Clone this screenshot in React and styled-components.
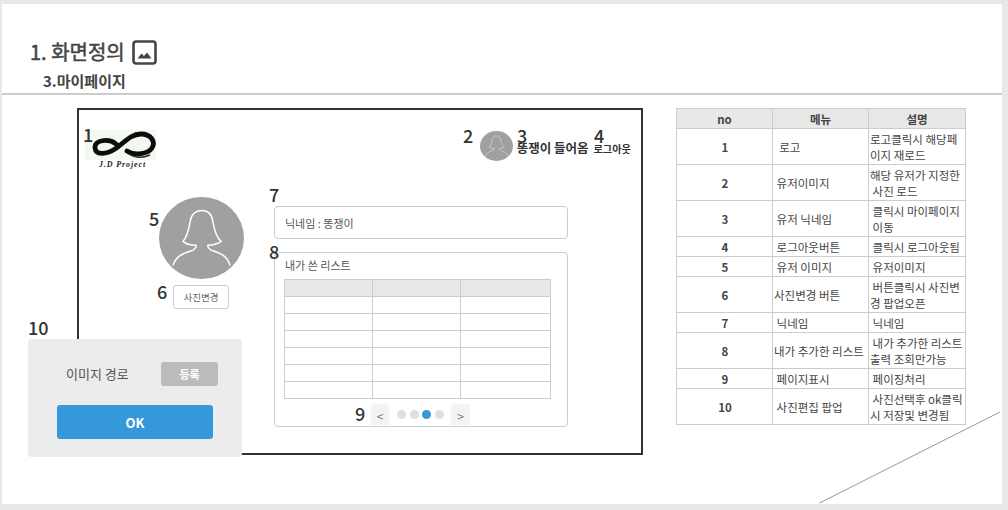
import React from "react";
import styled, { createGlobalStyle } from "styled-components";

const FONT = `"Noto Sans CJK KR", "Noto Sans", sans-serif`;

const specRows = [
  ["1", "  로고", "로고클릭시 해당페\n이지 재로드", true],
  ["2", " 유저이미지", "해당 유저가 지정한\n 사진 로드", true],
  ["3", " 유저 닉네임", " 클릭시 마이페이지\n 이동", true],
  ["4", " 로그아웃버튼", " 클릭시 로그아웃됨"],
  ["5", " 유저 이미지", " 유저이미지"],
  ["6", "사진변경 버튼", " 버튼클릭시 사진변\n경 팝업오픈", true],
  ["7", " 닉네임", " 닉네임"],
  ["8", "내가 추가한 리스트", " 내가 추가한 리스트\n출력 조회만가능", true],
  ["9", " 페이지표시", " 페이징처리"],
  ["10", " 사진편집 팝업", " 사진선택후 ok클릭\n시 저장및 변경됨", true],
];

const Person = ({ color, width }) => (
  <svg viewBox="0 0 85 85" width="100%" height="100%" preserveAspectRatio="none">
    <path
      d="M14 71C17 60 26 58 34 55C37 53 38 52 37 50C33 50 27 49 24 46C29 40 30 32 31 26C32 18 37 14 43 14C49 14 53 18 54 26C55 32 56 40 62 46C58 49 53 50 49 50C48 52 49 53 52 55C60 58 68 60 71 71"
      fill="none"
      stroke={color}
      strokeWidth={width}
    />
  </svg>
);

const App = () => {
  return (
    <Slide>
      <GlobalStyle />
      <Header>
        <Title>
          1. 화면정의
          <svg width="25" height="25" viewBox="0 0 25 25">
            <rect x="1.500" y="1.500" width="22" height="22" rx="2.500" fill="none" stroke="#444" strokeWidth="2.600" />
            <path d="M5.500 18.500L9.500 13.500L12 16L15 12.500L19.500 18.500Z" fill="#444" />
          </svg>
        </Title>
        <SubTitle>3.마이페이지</SubTitle>
      </Header>

      <Main>
        <Frame>
          <Num $left={4} $top={14}>1</Num>
          <Num $left={384} $top={15}>2</Num>
          <Num $left={438} $top={15}>3</Num>
          <Num $left={515} $top={15}>4</Num>
          <Num $left={70} $top={98}>5</Num>
          <Num $left={78} $top={171}>6</Num>
          <Num $left={190} $top={74}>7</Num>
          <Num $left={190} $top={131}>8</Num>
          <Num $left={276} $top={293}>9</Num>

          <TopBar>
            <Logo>
              <LogoMark>
                <svg width="71" height="30" viewBox="0 0 71 30">
                  <path
                    d="M31 14C24 8 9 10 10 18C11 26 22 24 30 19C38 14 45 4 56 4C66 4 71 12 67 18C63 24 50 26 42 21"
                    fill="none"
                    stroke="#0c0c0c"
                    strokeWidth="4.800"
                    strokeLinecap="round"
                  />
                  <path d="M44 24C50 28 58 28 65 25" fill="none" stroke="#222" strokeWidth="1.500" />
                </svg>
              </LogoMark>
              <LogoText>J.D Project</LogoText>
            </Logo>
            <UserArea>
              <SmallAvatar>
                <Person color="#d4d4d4" width="2" />
              </SmallAvatar>
              <UserName>똥쟁이 들어옴</UserName>
              <Logout>로그아웃</Logout>
            </UserArea>
          </TopBar>

          <Body>
            <Profile>
              <BigAvatar>
                <Person color="#fff" width="1.500" />
              </BigAvatar>
              <PhotoButton>사진변경</PhotoButton>
            </Profile>
            <Content>
              <NickBox>닉네임 : 똥쟁이</NickBox>
              <ListBox>
                <ListTitle>내가 쓴 리스트</ListTitle>
                <MiniTable>
                  <colgroup>
                    <col width="88" />
                    <col width="88" />
                    <col width="90" />
                  </colgroup>
                  <tbody>
                    {[0, 1, 2, 3, 4, 5, 6].map((r) => (
                      <tr key={r}>
                        {[0, 1, 2].map((c) => (
                          <MiniCell key={c} $head={r === 0} />
                        ))}
                      </tr>
                    ))}
                  </tbody>
                </MiniTable>
                <Pager>
                  <PageArrow>&lt;</PageArrow>
                  <Dots>
                    <Dot />
                    <Dot />
                    <Dot $active />
                    <Dot />
                  </Dots>
                  <PageArrow>&gt;</PageArrow>
                </Pager>
              </ListBox>
            </Content>
          </Body>
        </Frame>

        <SpecTable>
          <colgroup>
            <col width="96" />
            <col width="96" />
            <col width="97" />
          </colgroup>
          <thead>
            <tr>
              <SpecHead>no</SpecHead>
              <SpecHead>메뉴</SpecHead>
              <SpecHead>설명</SpecHead>
            </tr>
          </thead>
          <tbody>
            {specRows.map(([no, menu, desc, tall]) => (
              <tr key={no}>
                <NoCell $tall={tall}>{no}</NoCell>
                <SpecCell $tall={tall}>{menu}</SpecCell>
                <SpecCell $tall={tall}>{desc}</SpecCell>
              </tr>
            ))}
          </tbody>
        </SpecTable>
      </Main>

      <Popup>
        <PopupNum>10</PopupNum>
        <PopupRow>
          <PopupLabel>이미지 경로</PopupLabel>
          <RegisterButton>등록</RegisterButton>
        </PopupRow>
        <OkButton>OK</OkButton>
      </Popup>

      <Corner viewBox="0 0 182 94" width="182" height="94">
        <line x1="0.500" y1="92" x2="181" y2="1" stroke="#999" strokeWidth="1" />
      </Corner>
    </Slide>
  );
};

const GlobalStyle = createGlobalStyle`
  html, body {
    margin: 0;
    background: #e8e8e8;
  }
  body {
    font-family: ${FONT};
    overflow: hidden;
  }
  * {
    box-sizing: border-box;
  }
`;

const Slide = styled.div`
  position: relative;
  width: 1000px;
  height: 500px;
  margin: 4px 0 0 2px;
  background: #fff;
`;

const Header = styled.header`
  height: 91px;
  padding: 32px 0 0 28px;
  border-bottom: 2px solid #ccc;
`;

const Title = styled.h1`
  display: flex;
  align-items: center;
  gap: 7px;
  margin: 0;
  height: 32px;
  font-size: 20px;
  font-weight: 400;
  line-height: 32px;
  color: #444;
  -webkit-text-stroke: 0.500px #444;
`;

const SubTitle = styled.h2`
  margin: 3px 0 0 13px;
  font-size: 15px;
  font-weight: 700;
  line-height: 20px;
  color: #444;
`;

const Main = styled.main`
  display: flex;
  align-items: flex-start;
  gap: 33px;
  padding: 13px 0 0 75px;
`;

const Frame = styled.section`
  position: relative;
  flex: none;
  width: 566px;
  height: 347px;
  border: 2px solid #333;
`;

const Num = styled.span`
  position: absolute;
  left: ${(p) => p.$left}px;
  top: ${(p) => p.$top}px;
  font-size: 18px;
  font-weight: 500;
  line-height: 20px;
  color: #333;
`;

const TopBar = styled.div`
  display: flex;
  justify-content: space-between;
  height: 87px;
  padding: 20px 10px 0 6px;
`;

const Logo = styled.div`
  display: flex;
  flex-direction: column;
  align-items: center;
  width: 71px;
`;

const LogoMark = styled.div`
  height: 30px;
  background: #f3f8f1;

  svg {
    display: block;
  }
`;

const LogoText = styled.span`
  padding-left: 4px;
  font-family: "Liberation Serif", serif;
  font-size: 8px;
  font-style: italic;
  font-weight: 700;
  line-height: 9px;
  letter-spacing: 0.900px;
  color: #222;
`;

const UserArea = styled.div`
  display: flex;
  align-items: flex-start;
  height: 31px;
`;

const SmallAvatar = styled.div`
  width: 33px;
  height: 30px;
  margin: 1px 4px 0 0;
  border-radius: 50%;
  background: #a0a0a0;
  overflow: hidden;
`;

const UserName = styled.span`
  margin-top: 10px;
  font-size: 12.500px;
  font-weight: 700;
  line-height: 15px;
  color: #333;
`;

const Logout = styled.span`
  margin: 12px 0 0 5px;
  font-size: 10.200px;
  font-weight: 700;
  line-height: 14px;
  color: #333;
`;

const Body = styled.div`
  display: flex;
  align-items: flex-start;
  padding-left: 80px;
`;

const Profile = styled.div`
  display: flex;
  flex-direction: column;
  align-items: center;
  gap: 6px;
  width: 85px;
`;

const BigAvatar = styled.div`
  width: 85px;
  height: 82px;
  border-radius: 50%;
  background: #a0a0a0;
  overflow: hidden;
`;

const PhotoButton = styled.button`
  width: 56px;
  height: 24px;
  margin-left: -1px;
  padding: 0;
  border: 1px solid #ccc;
  border-radius: 3px;
  background: #fff;
  font-family: ${FONT};
  font-size: 9.500px;
  color: #666;
`;

const Content = styled.div`
  display: flex;
  flex-direction: column;
  gap: 13px;
  width: 293.500px;
  margin: 9px 0 0 30px;
`;

const NickBox = styled.div`
  height: 33px;
  padding: 0 10px;
  border: 1px solid #ccc;
  border-radius: 4px;
  font-size: 11px;
  line-height: 33px;
  color: #555;
`;

const ListBox = styled.div`
  height: 175px;
  padding: 4px 17px 0 9px;
  border: 1px solid #ccc;
  border-radius: 4px;
`;

const ListTitle = styled.div`
  height: 22px;
  padding-left: 1px;
  font-size: 11px;
  line-height: 16px;
  color: #555;
`;

const MiniTable = styled.table`
  width: 266px;
  border-collapse: collapse;
  table-layout: fixed;
`;

const MiniCell = styled.td`
  height: 17px;
  padding: 0;
  border: 1px solid #ccc;
  background: ${(p) => (p.$head ? "#e8e8e8" : "#fff")};
`;

const Pager = styled.div`
  display: flex;
  justify-content: center;
  gap: 7px;
  margin-top: 5px;
  padding-left: 7px;
`;

const PageArrow = styled.span`
  width: 18.500px;
  height: 21px;
  border-radius: 3px;
  background: #f3f3f3;
  font-size: 12px;
  line-height: 24px;
  text-align: center;
  color: #777;
`;

const Dots = styled.div`
  display: flex;
  align-items: center;
  gap: 3.500px;
  width: 48px;
  padding-left: 1px;
`;

const Dot = styled.i`
  flex: none;
  width: 9px;
  height: 9px;
  border-radius: 50%;
  background: ${(p) => (p.$active ? "#3498db" : "#dfdfdf")};
`;

const SpecTable = styled.table`
  flex: none;
  width: 289px;
  border-collapse: collapse;
  table-layout: fixed;
  font-size: 11.500px;
  color: #444;
`;

const SpecHead = styled.th`
  height: 20px;
  padding: 0;
  border: 1px solid #ccc;
  background: #e8e8e8;
  font-size: 11.500px;
  font-weight: 700;
  line-height: 16px;
  color: #444;
`;

const SpecCell = styled.td`
  height: ${(p) => (p.$tall ? 36 : 20)}px;
  padding: 0 0 0 1px;
  border: 1px solid #ccc;
  line-height: 16px;
  white-space: pre;
`;

const NoCell = styled(SpecCell)`
  font-weight: 700;
  text-align: center;
`;

const Popup = styled.div`
  position: absolute;
  left: 26px;
  top: 335px;
  width: 214px;
  height: 118px;
  padding: 23px 29px 0;
  border-radius: 4px;
  background: #ececec;
`;

const PopupNum = styled.span`
  position: absolute;
  left: 0;
  top: -22px;
  font-size: 18px;
  font-weight: 500;
  line-height: 20px;
  color: #333;
`;

const PopupRow = styled.div`
  display: flex;
  align-items: center;
  justify-content: space-between;
  height: 24px;
`;

const PopupLabel = styled.span`
  margin-left: 9px;
  font-size: 13px;
  line-height: 18px;
  color: #555;
`;

const RegisterButton = styled.button`
  width: 57px;
  height: 24px;
  margin-right: -5px;
  padding: 0;
  border: none;
  border-radius: 3px;
  background: #bbb;
  font-family: ${FONT};
  font-size: 11px;
  font-weight: 700;
  color: #fff;
`;

const OkButton = styled.button`
  display: block;
  width: 156px;
  height: 34px;
  margin-top: 19px;
  padding: 0;
  border: none;
  border-radius: 3px;
  background: #3498db;
  font-family: ${FONT};
  font-size: 13px;
  font-weight: 700;
  color: #fff;
`;

const Corner = styled.svg`
  position: absolute;
  left: 817px;
  top: 407px;
`;

export default App;
